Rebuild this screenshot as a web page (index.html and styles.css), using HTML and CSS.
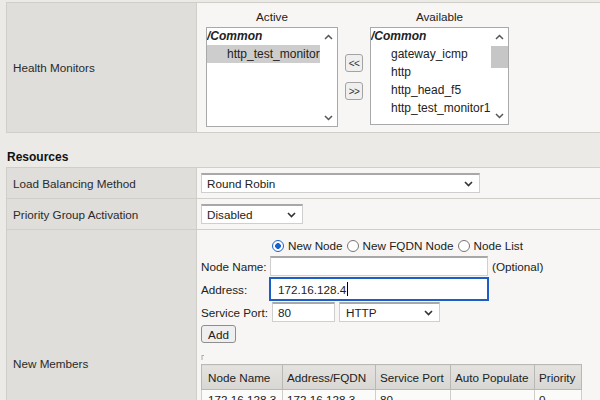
FILE: index.html
```html
<!DOCTYPE html>
<html>
<head>
<meta charset="utf-8">
<link rel="stylesheet" href="styles.css">
</head>
<body>
<table class="form form-top">
  <tr>
    <td class="lbl">Health Monitors</td>
    <td class="val val-hm">
      <div class="hm">
        <div class="hm-col">
          <div class="hm-head">Active</div>
          <div class="listbox lb-active">
            <div class="lb-items">
              <div class="lb-row lb-group">/Common</div>
              <div class="lb-row lb-item lb-sel">http_test_monitor1</div>
            </div>
            <div class="lb-scroll">
              <div class="sb-btn"><svg width="9" height="6" viewBox="0 0 9 6"><path d="M1 5 L4.5 1.5 L8 5" fill="none" stroke="#555" stroke-width="1.5"/></svg></div>
              <div class="sb-track"></div>
              <div class="sb-btn"><svg width="9" height="6" viewBox="0 0 9 6"><path d="M1 1 L4.5 4.5 L8 1" fill="none" stroke="#555" stroke-width="1.5"/></svg></div>
            </div>
          </div>
        </div>
        <div class="hm-btns">
          <button class="mv">&lt;&lt;</button>
          <button class="mv">&gt;&gt;</button>
        </div>
        <div class="hm-col">
          <div class="hm-head">Available</div>
          <div class="listbox lb-avail">
            <div class="lb-items">
              <div class="lb-row lb-group">/Common</div>
              <div class="lb-row lb-item">gateway_icmp</div>
              <div class="lb-row lb-item">http</div>
              <div class="lb-row lb-item">http_head_f5</div>
              <div class="lb-row lb-item">http_test_monitor1</div>
            </div>
            <div class="lb-scroll">
              <div class="sb-btn"><svg width="9" height="6" viewBox="0 0 9 6"><path d="M1 5 L4.5 1.5 L8 5" fill="none" stroke="#555" stroke-width="1.5"/></svg></div>
              <div class="sb-track"><div class="sb-thumb"></div></div>
              <div class="sb-btn"><svg width="9" height="6" viewBox="0 0 9 6"><path d="M1 1 L4.5 4.5 L8 1" fill="none" stroke="#555" stroke-width="1.5"/></svg></div>
            </div>
          </div>
        </div>
      </div>
    </td>
  </tr>
</table>

<div class="sec-title">Resources</div>

<table class="form">
  <tr>
    <td class="lbl">Load Balancing Method</td>
    <td class="val">
      <div class="sel sel-lb"><span>Round Robin</span><svg width="9" height="6" viewBox="0 0 9 6"><path d="M1 1 L4.5 4.5 L8 1" fill="none" stroke="#333" stroke-width="1.6"/></svg></div>
    </td>
  </tr>
  <tr>
    <td class="lbl">Priority Group Activation</td>
    <td class="val">
      <div class="sel sel-pg"><span>Disabled</span><svg width="9" height="6" viewBox="0 0 9 6"><path d="M1 1 L4.5 4.5 L8 1" fill="none" stroke="#333" stroke-width="1.6"/></svg></div>
    </td>
  </tr>
  <tr>
    <td class="lbl">New Members</td>
    <td class="val val-members">
      <div class="nm-grid">
        <div></div>
        <div class="radios">
          <span class="radio radio-on"></span><span class="rlabel">New Node</span>
          <span class="radio"></span><span class="rlabel">New FQDN Node</span>
          <span class="radio"></span><span class="rlabel">Node List</span>
        </div>
        <div class="flabel">Node Name:</div>
        <div class="frow"><div class="inp inp-name"></div><span class="hint">(Optional)</span></div>
        <div class="flabel">Address:</div>
        <div class="frow"><div class="inp inp-addr">172.16.128.4<span class="caret"></span></div></div>
        <div class="flabel">Service Port:</div>
        <div class="frow"><div class="inp inp-port">80</div><div class="sel sel-http"><span>HTTP</span><svg width="9" height="6" viewBox="0 0 9 6"><path d="M1 1 L4.5 4.5 L8 1" fill="none" stroke="#333" stroke-width="1.6"/></svg></div></div>
      </div>
      <button class="btn-add">Add</button>
      <svg class="mark" width="4" height="6" viewBox="0 0 4 6"><path d="M1 1 V6 M1 1.5 H3" stroke="#aaa" stroke-width="1" fill="none"/></svg>
      <table class="mt">
        <tr>
          <th class="c1">Node Name</th>
          <th class="c2">Address/FQDN</th>
          <th class="c3">Service Port</th>
          <th class="c4">Auto Populate</th>
          <th class="c5">Priority</th>
        </tr>
        <tr>
          <td class="c1">172.16.128.3</td>
          <td class="c2">172.16.128.3</td>
          <td class="c3">80</td>
          <td class="c4"></td>
          <td class="c5">0</td>
        </tr>
      </table>
    </td>
  </tr>
</table>
</body>
</html>
```

FILE: styles.css
```css
html, body {
  overflow: hidden;
}
body {
  margin: 0;
  padding: 2px 0 0 6px;
  background: #ebeae6;
  font-family: "Liberation Sans", Arial, sans-serif;
  font-size: 11.7px;
  color: #222;
}

table.form {
  border-collapse: collapse;
  width: 620px;
  border: 1px solid #c2c1bd;
}
td.lbl {
  width: 183px;
  padding: 0 0 0 6px;
  background: #dfdeda;
  border: 1px solid #cfcec9;
  vertical-align: middle;
  color: #2a2a2a;
}
td.val {
  background: #f7f6f4;
  padding: 5px 0 5px 4px;
  border: 1px solid #cfcec9;
  vertical-align: top;
}
.form-top {
  border-bottom: 2px solid #c2c1bd;
}
td.val-hm {
  padding: 7px 0 5px 9px;
}

/* Health monitors */
.hm {
  display: flex;
  align-items: flex-start;
}
.hm-col {
  display: flex;
  flex-direction: column;
  align-items: stretch;
}
.hm-head {
  line-height: 14px;
  height: 14px;
  margin-bottom: 3px;
  text-align: center;
}
.listbox {
  display: flex;
  box-sizing: border-box;
  border: 1px solid #a9a9a9;
  background: #fff;
  height: 100px;
  font-size: 12px;
}
.lb-active { width: 132px; }
.lb-avail { width: 139px; height: 98px; }
.lb-items {
  flex: 1;
  overflow: hidden;
}
.lb-row {
  height: 18px;
  line-height: 18px;
  white-space: nowrap;
}
.lb-group {
  font-weight: bold;
  font-style: italic;
  height: 17px;
  line-height: 17px;
}
.lb-item {
  padding-left: 20px;
}
.lb-sel {
  background: #cdcdcd;
}
.lb-scroll {
  width: 17px;
  display: flex;
  flex-direction: column;
}
.sb-btn {
  height: 17px;
  display: flex;
  align-items: center;
  justify-content: center;
}
.sb-btn svg { display: block; }
.sb-track {
  flex: 1;
}
.sb-thumb {
  margin-top: 1px;
  height: 22px;
  background: #c6c6c6;
}
.hm-btns {
  display: flex;
  flex-direction: column;
  gap: 10px;
  margin: 44px 7px 0;
}
.mv {
  width: 18px;
  height: 18px;
  padding: 0;
  font-family: "Liberation Sans", Arial, sans-serif;
  font-size: 10px;
  letter-spacing: -0.5px;
  color: #333;
  background: #efefef;
  border: 1px solid #a3a3a3;
  border-radius: 3px;
}

/* Section title */
.sec-title {
  font-weight: bold;
  font-size: 12px;
  line-height: 14px;
  padding: 17px 0 3px 1px;
  color: #111;
}

/* Selects & inputs */
.sel {
  display: flex;
  align-items: center;
  justify-content: space-between;
  box-sizing: border-box;
  height: 20px;
  border: 1px solid #cfcfcf;
  border-top: 2px solid #a8a8a8;
  background: #fff;
  padding: 0 6px 0 5px;
  color: #222;
}
.sel svg { display: block; }
.sel-lb { width: 279px; }
.sel-pg { width: 102px; }
.sel-http { width: 101px; padding-left: 6px; margin-left: 4px; height: 20px; }

td.val-members {
  padding: 7px 0 83px 4px;
}
.nm-grid {
  display: grid;
  grid-template-columns: 69px auto;
  grid-template-rows: 18px 20px 24px 20px;
  row-gap: 1px;
  align-items: center;
}
.radios {
  display: flex;
  align-items: center;
  margin-left: 2px;
  margin-bottom: 1px;
}
.radio {
  width: 12px;
  height: 12px;
  box-sizing: border-box;
  border: 1px solid #777;
  border-radius: 50%;
  background: #fff;
  margin-right: 4px;
}
.radio-on {
  border: 1.5px solid #1a62d0;
  background: radial-gradient(circle, #1a62d0 0 2.6px, #fff 3.1px);
}
.rlabel {
  margin-right: 4px;
}
.flabel {
  white-space: nowrap;
}
.frow {
  display: flex;
  align-items: center;
}
.inp {
  box-sizing: border-box;
  height: 20px;
  display: flex;
  align-items: center;
  border: 1px solid #cfcfcf;
  border-top: 2px solid #a8a8a8;
  background: #fff;
  padding: 0 5px;
}
.inp-name { width: 218px; }
.hint { margin-left: 4px; }
.inp-addr {
  width: 220px;
  height: 24px;
  margin-left: -1px;
  border: 2px solid #1b5fc6;
  padding-left: 7px;
}
.caret {
  display: inline-block;
  width: 1px;
  height: 14px;
  background: #000;
  margin-left: 1px;
}
.inp-port {
  width: 63px;
  margin-left: 2px;
}

.btn-add {
  display: block;
  margin-top: 3px;
  width: 35px;
  height: 18px;
  padding: 0;
  font-family: "Liberation Sans", Arial, sans-serif;
  font-size: 11.7px;
  color: #222;
  background: #efefef;
  border: 1px solid #8e8e8e;
  border-radius: 3px;
}
.mark {
  display: block;
  margin-top: 11px;
}

/* Members table */
.mt {
  border-collapse: collapse;
  margin-top: 4px;
  width: 379px;
  table-layout: fixed;
}
.mt th {
  height: 24px;
  font-weight: normal;
  text-align: left;
  padding: 0 0 0 4px;
  color: #222;
  background: linear-gradient(#e4e3df, #d8d7d3);
  border: 1px solid #b9b8b4;
  white-space: nowrap;
}
.mt td {
  height: 20px;
  padding: 3px 0 0 4px;
  background: #fbfbfa;
  border: 1px solid #cfcec9;
  white-space: nowrap;
  vertical-align: top;
}
.mt .c1 { width: 74px; padding-left: 6px; }
.mt .c2 { width: 88px; }
.mt .c3 { width: 70px; }
.mt .c4 { width: 79px; }
.mt .c5 { width: 42px; }
```
